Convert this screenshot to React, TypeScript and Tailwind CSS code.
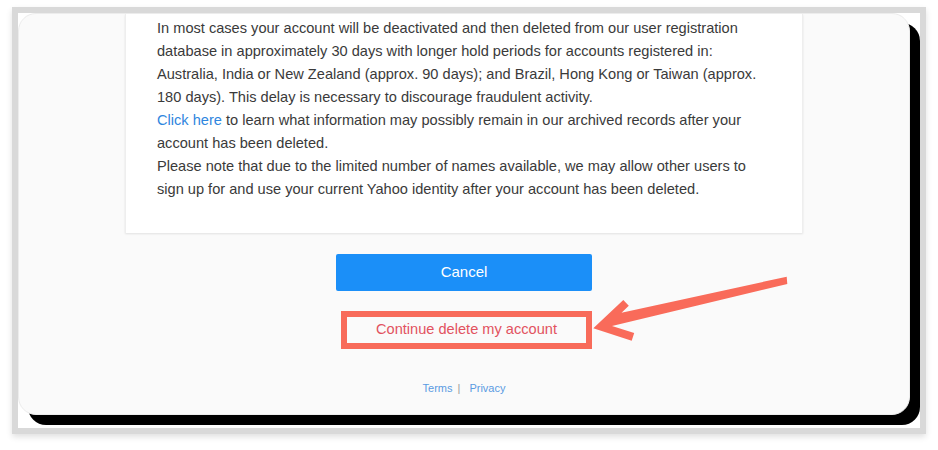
import React from "react";

const lines1 = [
  "In most cases your account will be deactivated and then deleted from our user registration",
  "database in approximately 30 days with longer hold periods for accounts registered in:",
  "Australia, India or New Zealand (approx. 90 days); and Brazil, Hong Kong or Taiwan (approx.",
  "180 days). This delay is necessary to discourage fraudulent activity.",
];

export default function App() {
  return (
    <div
      className="relative w-[938px] h-[450px] bg-white overflow-hidden"
      style={{ fontFamily: '"Liberation Sans", Arial, sans-serif' }}
    >
      <div className="ml-[12px] mt-[7px] w-[914px] border-[6px] border-[#d9d9d9] bg-white shadow-[0_3px_6px_rgba(0,0,0,0.12)]">
        <div className="relative w-[892px] h-[402px] mb-[13px] rounded-[18px] bg-[#fafafa] border border-[#ececec] shadow-[10px_10px_0_#000] overflow-hidden flex flex-col items-center">
          <div className="w-[678px] bg-white pl-[31px] pt-[2.5px] pb-[32px] shadow-[0_1px_2px_rgba(0,0,0,0.10)] border-x border-[#eeeeee] text-[14.6px] leading-[23px] text-[#3a3a3a]">
            {lines1.map((l) => (
              <div key={l} className="whitespace-nowrap">{l}</div>
            ))}
            <div className="whitespace-nowrap">
              <span className="text-[#2f86de]">Click here</span> to learn what information may possibly remain in our archived records after your
            </div>
            <div className="whitespace-nowrap">account has been deleted.</div>
            <div className="whitespace-nowrap">
              Please note that due to the limited number of names available, we may allow other users to
            </div>
            <div className="whitespace-nowrap">
              sign up for and use your current Yahoo identity after your account has been deleted.
            </div>
          </div>
          <div className="mt-[21px] w-[256px] h-[37px] rounded-[2px] bg-[#1b8ff8] flex items-center justify-center text-white text-[15px]">
            Cancel
          </div>
          <div className="mt-[20px] ml-[5px] w-[251px] h-[38px] border-[6px] border-[#f86b5a] flex items-center justify-center text-[#e2525f] text-[14.6px]">
            Continue delete my account
          </div>
          <div className="mt-[32px] flex items-center text-[11px] leading-[14px]">
            <span className="text-[#5a9be2]">Terms</span>
            <span className="text-[#9a9a9a] ml-[5px] mr-[9px]">|</span>
            <span className="text-[#5a9be2]">Privacy</span>
          </div>
        </div>
      </div>
      <svg
        className="absolute left-0 top-0 pointer-events-none"
        width="938"
        height="450"
        viewBox="0 0 938 450"
      >
        <polygon
          fill="#f96b5a"
          points="593.3,328.3 623.3,300 628.8,305.8 621.5,312.7 786.7,276.7 787.3,284 612,326 634.2,333.1 631.7,340.7"
        />
      </svg>
    </div>
  );
}
